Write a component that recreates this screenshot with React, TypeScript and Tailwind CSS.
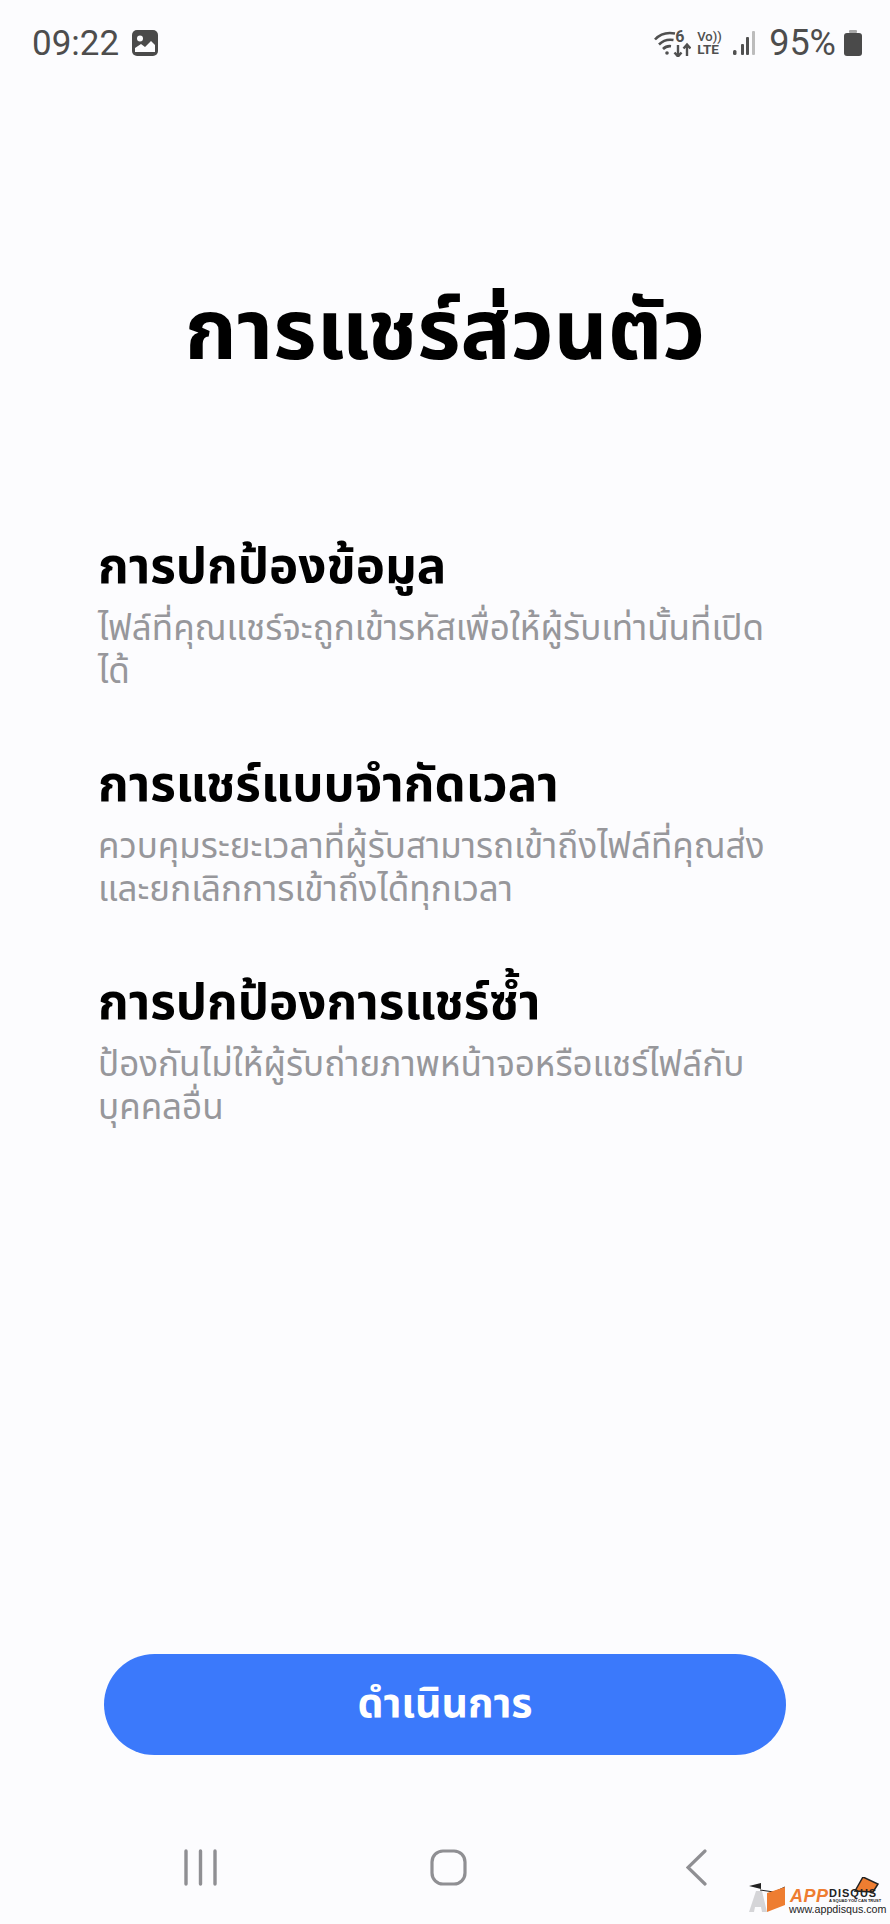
import React from "react";

const FONT = "font-['Noto_Sans_Thai','Liberation_Sans','Noto_Sans',sans-serif]";

function Section({ title, lines, className }: { title: string; lines: string[]; className?: string }) {
  return (
    <div className={className}>
      <h2 className="text-[49.3px] leading-[60px] font-bold text-black whitespace-nowrap">{title}</h2>
      <p className="mt-[10px] text-[35px] leading-[43px] text-[#97979b]">
        {lines.map((l) => (
          <span key={l} className="block whitespace-nowrap">{l}</span>
        ))}
      </p>
    </div>
  );
}

export default function App() {
  return (
    <div className={`${FONT} relative flex flex-col w-[890px] h-[1924px] bg-[#fcfcfe] overflow-hidden`}>
      <div className="flex items-center justify-between h-[86px] pl-[32px] pr-[28px] text-[#4d4d4d]">
        <div className="flex items-center gap-[13px]">
          <span className="font-['Roboto',sans-serif] text-[35px] leading-none">09:22</span>
          <svg width="26" height="26" viewBox="0 0 26 26">
            <rect width="26" height="26" rx="5" fill="#4a4a4a" />
            <circle cx="8" cy="8.5" r="3" fill="#fcfcfe" />
            <path d="M3 22v-4l6-4 4 3 6-6 4 4v7z" fill="#fcfcfe" />
          </svg>
        </div>
        <div className="flex items-center">
          <div className="relative w-[37px] h-[27px]">
            <svg width="37" height="27" viewBox="0 0 37 27" fill="none" stroke="#505050" strokeWidth="2.6">
              <path d="M1 9.5C6 4 13 2 21 3.5M5 14.5C9 10.5 14 9 19.5 10M9 19c2.500-2.500 5-3.200 8-2.800" />
              <circle cx="13" cy="23" r="1.8" fill="#505050" stroke="none" />
              <path d="M24 15v11M20.500 22.500l3.500 4 3.500-4M33 26V15M29.500 18.500l3.500-4 3.500 4" strokeWidth="2.4" />
            </svg>
            <span className="absolute left-[21px] top-[-1px] font-['Roboto',sans-serif] font-bold text-[16px] leading-[16px] text-[#505050]">6</span>
          </div>
          <div className="ml-[6px] w-[25px] flex flex-col items-start font-['Roboto',sans-serif] font-medium text-[13px] leading-[13px] text-[#505050]">
            <span>Vo))</span>
            <span className="text-[13.5px] font-bold">LTE</span>
          </div>
          <svg className="ml-[11px]" width="22" height="24" viewBox="0 0 22 24" fill="none">
            <rect x="0" y="19" width="3.500" height="5" rx="1.500" fill="#505050" />
            <rect x="8" y="13" width="3" height="11" rx="1" fill="#505050" />
            <rect x="13" y="6" width="3" height="18" rx="1" fill="#505050" />
            <rect x="19" y="0" width="3" height="24" rx="1" fill="#bcbcbc" />
          </svg>
          <span className="ml-[14px] font-['Roboto',sans-serif] text-[36px] leading-none">95%</span>
          <svg className="ml-[8px]" width="18" height="26" viewBox="0 0 18 26">
            <rect x="5" y="0" width="8" height="3" rx="1" fill="#a8a8a8" />
            <rect x="0" y="3" width="18" height="23" rx="3" fill="#4a4a4a" />
          </svg>
        </div>
      </div>

      <h1 className="mt-[200px] text-center text-[83.500px] leading-[96px] font-bold text-black whitespace-nowrap">การแชร์ส่วนตัว</h1>

      <div className="mt-[156px] ml-[98px] flex flex-col">
        <Section title="การปกป้องข้อมูล" lines={["ไฟล์ที่คุณแชร์จะถูกเข้ารหัสเพื่อให้ผู้รับเท่านั้นที่เปิด", "ได้"]} />
        <Section className="mt-[62px]" title="การแชร์แบบจำกัดเวลา" lines={["ควบคุมระยะเวลาที่ผู้รับสามารถเข้าถึงไฟล์ที่คุณส่ง", "และยกเลิกการเข้าถึงได้ทุกเวลา"]} />
        <Section className="mt-[62px]" title="การปกป้องการแชร์ซ้ำ" lines={["ป้องกันไม่ให้ผู้รับถ่ายภาพหน้าจอหรือแชร์ไฟล์กับ", "บุคคลอื่น"]} />
      </div>

      <div className="mt-auto px-[104px]">
        <button className="w-[682px] h-[101px] rounded-full bg-[#3b79fb] text-white text-[41px] font-bold">ดำเนินการ</button>
      </div>

      <div className="mt-[94px] h-[75px] flex items-start pl-[184px]">
        <svg width="33" height="37" viewBox="0 0 33 37" fill="none" stroke="#8f8f93" strokeWidth="3.4" strokeLinecap="round">
          <path d="M2 2v33M16.500 2v33M31 2v33" />
        </svg>
        <svg className="ml-[213px]" width="37" height="37" viewBox="0 0 37 37" fill="none" stroke="#8f8f93" strokeWidth="3.2">
          <rect x="2" y="2" width="33" height="33" rx="11" />
        </svg>
        <svg className="ml-[219px]" width="21" height="37" viewBox="0 0 21 37" fill="none" stroke="#8f8f93" strokeWidth="3.2" strokeLinecap="round">
          <path d="M19 2L2 18.500 19 35" />
        </svg>
      </div>

      <div className="absolute left-[749px] top-[1877px] w-[136px] h-[38px]">
        <svg width="136" height="38" viewBox="0 0 136 38">
          <path d="M0 9l12-3v6z" fill="#222" />
          <path d="M11 13l14 2 11-5" fill="none" stroke="#222" strokeWidth="1" />
          <path d="M0 35L7 14h6l5 21h-5l-1-5H6l-1 5z" fill="#d5d5d8" />
          <path d="M18 16l18-6v18l-18 7z" fill="#ee7d31" />
          <path d="M106 14l8-14 15 7-5 8z" fill="#ee7d31" stroke="#222" strokeWidth="1.500" />
        </svg>
        <span className="absolute left-[41px] top-[10px] font-['Liberation_Sans',sans-serif] italic font-bold text-[#ee7d31] text-[18px] leading-none tracking-[0.5px]">APP</span>
        <span className="absolute left-[80px] top-[11px] font-['Liberation_Sans',sans-serif] font-bold text-[#222] text-[11px] leading-[11px] tracking-[1px]">DISQUS</span>
        <span className="absolute left-[80px] top-[22px] font-['Liberation_Sans',sans-serif] font-bold text-[#222] text-[4px] leading-[4px] whitespace-nowrap">A SQUAD YOU CAN TRUST</span>
        <span className="absolute left-[40px] top-[27px] font-['Liberation_Sans',sans-serif] text-[#222] text-[10.7px] leading-[11px] whitespace-nowrap">www.appdisqus.com</span>
      </div>
    </div>
  );
}
